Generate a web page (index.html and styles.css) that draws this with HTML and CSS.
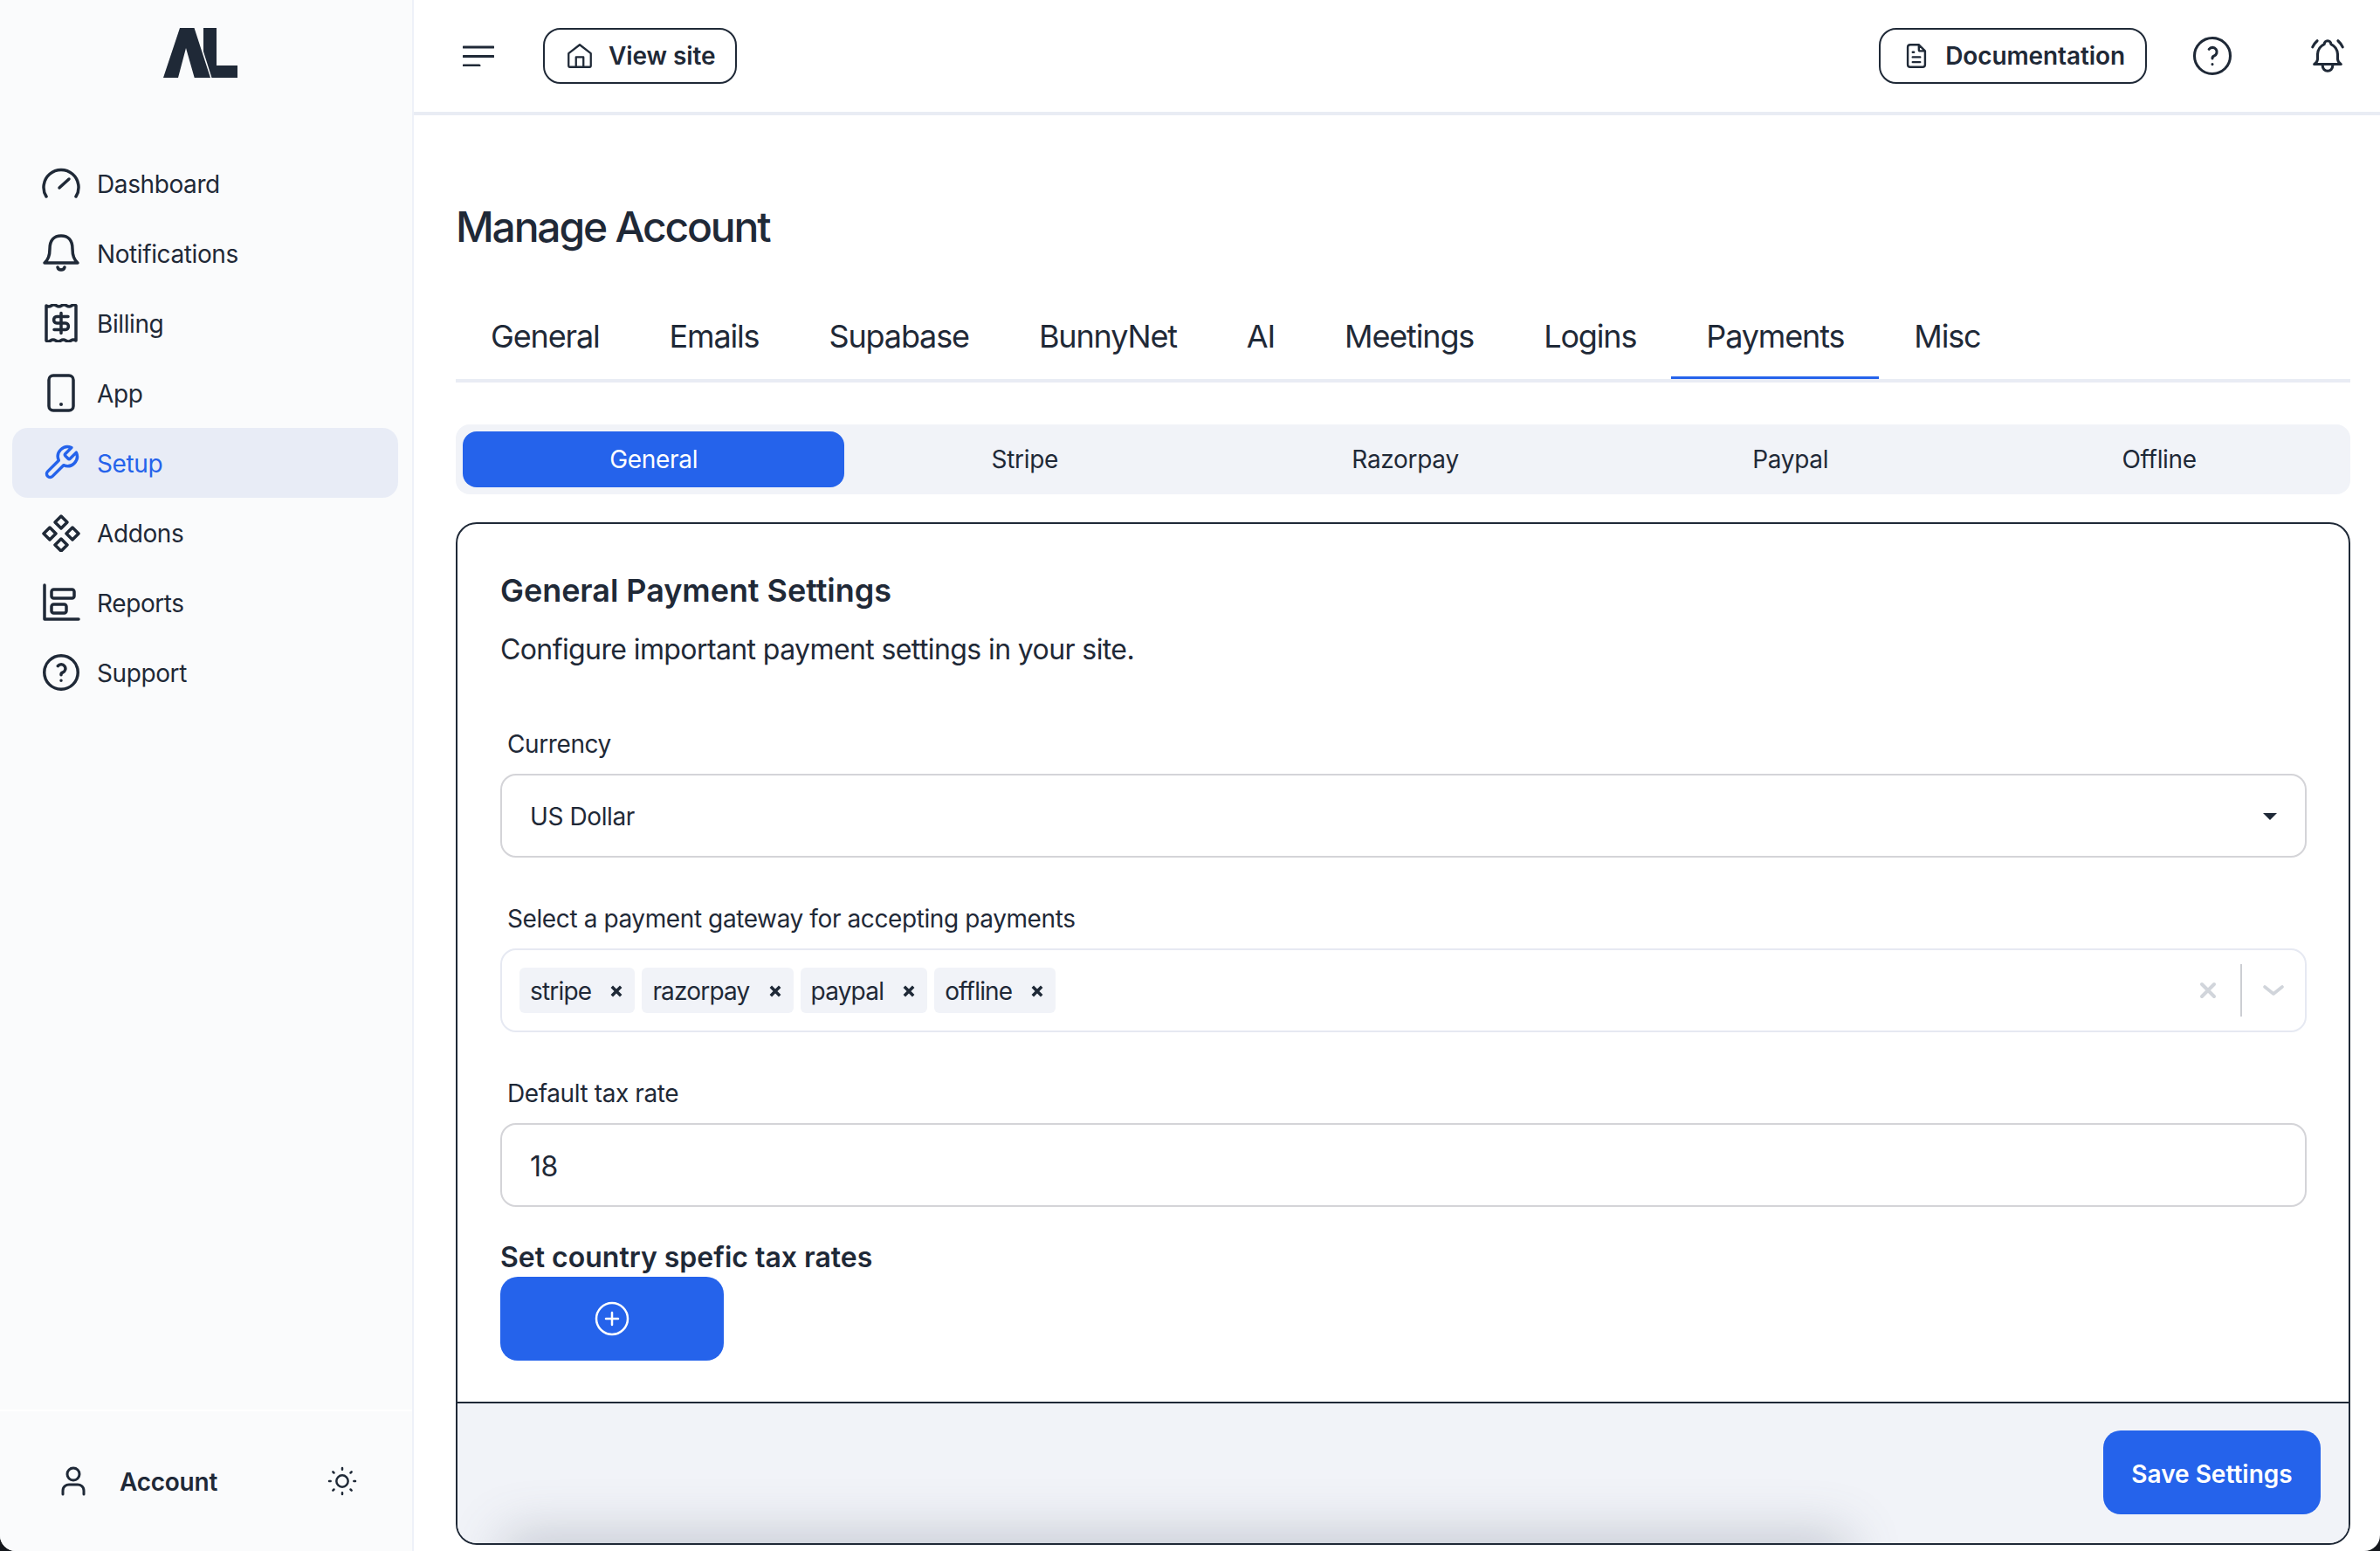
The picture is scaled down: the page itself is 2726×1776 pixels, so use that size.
FILE: index.html
```html
<!DOCTYPE html>
<html lang="en">
<head>
<meta charset="utf-8">
<title>Manage Account</title>
<link rel="stylesheet" href="styles.css">
</head>
<body>
<div class="app">
  <aside class="sidebar">
    <div class="logo">
      <svg width="85" height="57" viewBox="0 0 85 57"><path class="logo-mark" d="M0 57 19 0H35.500L54 57H35.700L26 23 17 57Z"/><path class="logo-mark" d="M46 0H61V43H85V57H55.500L46 27Z"/></svg>
    </div>
    <nav class="nav">
      <a class="nav-item"><svg class="nav-icon" viewBox="0 0 44 44"><path d="M5 37A20 20 0 1 1 39 37"/><path d="M20 27 31 17"/></svg><span>Dashboard</span></a>
      <a class="nav-item"><svg class="nav-icon" viewBox="0 0 44 44"><path d="M3 33C8 29 9 24 9 17 9 7 14 2 22 2 30 2 35 7 35 17 35 24 36 29 41 33Z"/><path d="M18 38C19 42 25 42 26 38"/></svg><span>Notifications</span></a>
      <a class="nav-item"><svg class="nav-icon" viewBox="0 0 44 44"><path d="M5 2Q8 4 10.800 2T16.600 2 22.400 2 28.200 2 34 2 39 2V42Q36 40 33.200 42T27.400 42 21.600 42 15.800 42 10 42 5 42Z"/><path d="M30 14.500H17C12.500 14.500 12.500 22 17 22H27C31.500 22 31.500 29.500 27 29.500H14M22 10.500V33.500"/></svg><span>Billing</span></a>
      <a class="nav-item"><svg class="nav-icon" viewBox="0 0 44 44"><rect x="8" y="2" width="28" height="40" rx="5"/><circle class="dot" cx="22" cy="35" r="2"/></svg><span>App</span></a>
      <a class="nav-item active"><svg class="nav-icon wrench" viewBox="0 0 24 24"><path d="M14.700 6.300a1 1 0 0 0 0 1.400l1.600 1.600a1 1 0 0 0 1.400 0l3.770-3.770a6 6 0 0 1-7.940 7.940l-6.910 6.910a2.120 2.120 0 0 1-3-3l6.910-6.910a6 6 0 0 1 7.940-7.940l-3.760 3.760z"/></svg><span>Setup</span></a>
      <a class="nav-item"><svg class="nav-icon" viewBox="0 0 44 44"><path d="M22 3 29 10 22 17 15 10Z"/><path d="M9 16 16 23 9 30 2 23Z"/><path d="M35 16 42 23 35 30 28 23Z"/><path d="M22 29 29 36 22 43 15 36Z"/></svg><span>Addons</span></a>
      <a class="nav-item"><svg class="nav-icon" viewBox="0 0 44 44"><path d="M3 2V41H42"/><rect x="11" y="7" width="26" height="10" rx="2.500"/><rect x="11" y="24" width="17" height="10" rx="2.500"/></svg><span>Reports</span></a>
      <a class="nav-item"><svg class="nav-icon" viewBox="0 0 24 24"><circle cx="12" cy="12" r="10.500"/><path d="M12 17v.01M12 13.500a1.500 1.500 0 0 1 1-1.500 2.600 2.600 0 1 0-3-4"/></svg><span>Support</span></a>
    </nav>
    <div class="side-foot">
      <svg class="person" viewBox="0 0 34 36"><circle cx="17" cy="10" r="7"/><path d="M5 33V29C5 24 9 22 12 22H22C25 22 29 24 29 29V33"/></svg>
      <span class="account">Account</span>
      <svg class="sun" viewBox="0 0 24 24"><circle cx="12" cy="12" r="4"/><path d="M3 12h1m8-9v1m8 8h1m-9 8v1M5.600 5.600l.7.7m12.100-.7-.7.7m0 11.400.7.7M6.300 17.700l-.7.7"/></svg>
    </div>
  </aside>
  <div class="main">
    <header class="topbar">
      <svg class="burger" viewBox="0 0 36 24"><path d="M1 2H35M1 12.500H35M1 23H19"/></svg>
      <a class="ghost-btn view-site"><svg class="home" viewBox="0 0 24 24"><path d="M3 10 12 3l9 7v10a1 1 0 0 1-1 1H4a1 1 0 0 1-1-1ZM9 21v-8h6v8"/></svg>View site</a>
      <a class="ghost-btn docs"><svg class="doc" viewBox="0 0 24 24"><path d="M14 3v4a1 1 0 0 0 1 1h4M17 21H7a2 2 0 0 1-2-2V5a2 2 0 0 1 2-2h7l5 5v11a2 2 0 0 1-2 2zM9 9h1M9 13h6M9 17h6"/></svg>Documentation</a>
      <svg class="top-icon help" viewBox="0 0 24 24"><circle cx="12" cy="12" r="10.700"/><path d="M12 17v.01M12 13.500a1.500 1.500 0 0 1 1-1.500 2.600 2.600 0 1 0-3-4"/></svg>
      <svg class="top-icon bell" viewBox="0 0 24 24"><path d="M10 5a2 2 0 0 1 4 0 7 7 0 0 1 4 6v3a4 4 0 0 0 2 3H4a4 4 0 0 0 2-3v-3a7 7 0 0 1 4-6M9 17v1a3 3 0 0 0 6 0v-1M21 6.727A11.050 11.050 0 0 0 18.206 3M3 6.727A11.050 11.050 0 0 1 5.792 3"/></svg>
    </header>
    <main class="content">
      <h1 class="page-title">Manage Account</h1>
      <div class="tabs">
        <a class="tab">General</a>
        <a class="tab">Emails</a>
        <a class="tab">Supabase</a>
        <a class="tab">BunnyNet</a>
        <a class="tab">AI</a>
        <a class="tab">Meetings</a>
        <a class="tab">Logins</a>
        <a class="tab active">Payments</a>
        <a class="tab">Misc</a>
      </div>
      <div class="subtabs">
        <a class="subtab active">General</a>
        <a class="subtab">Stripe</a>
        <a class="subtab">Razorpay</a>
        <a class="subtab">Paypal</a>
        <a class="subtab">Offline</a>
      </div>
      <section class="card">
        <div class="card-body">
          <h2 class="card-title">General Payment Settings</h2>
          <p class="card-sub">Configure important payment settings in your site.</p>
          <div class="field first">
            <div class="label">Currency</div>
            <div class="control">US Dollar<span class="caret"></span></div>
          </div>
          <div class="field">
            <div class="label">Select a payment gateway for accepting payments</div>
            <div class="control multi">
              <span class="tag">stripe<svg class="tag-x" viewBox="0 0 14 14"><path d="M1.800 1.800 12.200 12.200M12.200 1.800 1.800 12.200"/></svg></span>
              <span class="tag">razorpay<svg class="tag-x" viewBox="0 0 14 14"><path d="M1.800 1.800 12.200 12.200M12.200 1.800 1.800 12.200"/></svg></span>
              <span class="tag">paypal<svg class="tag-x" viewBox="0 0 14 14"><path d="M1.800 1.800 12.200 12.200M12.200 1.800 1.800 12.200"/></svg></span>
              <span class="tag">offline<svg class="tag-x" viewBox="0 0 14 14"><path d="M1.800 1.800 12.200 12.200M12.200 1.800 1.800 12.200"/></svg></span>
              <span class="multi-tools">
                <svg class="clear-x" viewBox="0 0 20 20"><path d="M3 3 17 17M17 3 3 17"/></svg>
                <span class="sep"></span>
                <svg class="chev" viewBox="0 0 24 14"><path d="M2 3 12 11 22 3"/></svg>
              </span>
            </div>
          </div>
          <div class="field">
            <div class="label">Default tax rate</div>
            <div class="control big">18</div>
          </div>
          <h3 class="rates-title">Set country spefic tax rates</h3>
          <button class="primary add"><svg class="plus" viewBox="0 0 40 40"><circle cx="20" cy="20" r="18"/><path d="M20 13V27M13 20H27"/></svg></button>
        </div>
        <div class="card-foot">
          <span class="foot-shadow"></span>
          <button class="primary save">Save Settings</button>
        </div>
      </section>
    </main>
  </div>
</div>
</body>
</html>
```

FILE: styles.css
```css
* { box-sizing: border-box; }
html, body { margin: 0; height: 100%; background: #14171c; }
body { font-family: Inter, "Liberation Sans", sans-serif; color: #1f2937; font-size: 28px; letter-spacing: -0.4px; }
svg { display: block; flex: none; fill: none; stroke: currentColor; stroke-linecap: round; stroke-linejoin: round; }
a { color: inherit; text-decoration: none; }
h1, h2, h3, p { margin: 0; }

.app { display: flex; height: 1776px; background: #fff; border-radius: 0 0 18px 18px; overflow: hidden; }

/* Sidebar */
.sidebar { width: 474px; flex: none; display: flex; flex-direction: column; background: #fafbfc; border-right: 2px solid #eef1f8; }
.logo { display: flex; justify-content: center; padding: 32px 13px 81px 0; }
.logo svg { stroke: none; }
.logo-mark { fill: #1f2937; stroke: none; }
.nav { display: flex; flex-direction: column; }
.nav-item { display: flex; align-items: center; gap: 19px; height: 80px; margin: 0 16px 0 14px; padding-left: 34px; border-radius: 18px; }
.nav-item span { padding-top: 2px; }
.nav-item.active { background: #e8ecf6; color: #2563eb; }
.nav-icon { width: 44px; height: 44px; stroke-width: 3.500; }
.nav-icon[viewBox="0 0 24 24"] { stroke-width: 1.900; }
.nav-icon .dot { fill: currentColor; stroke: none; }
.side-foot { margin-top: auto; display: flex; align-items: center; height: 162px; padding: 0 60px 0 67px; border-top: 2px solid #fff; }
.person { width: 34px; height: 36px; stroke-width: 3; margin-right: 36px; }
.account { flex: 1; font-weight: 600; letter-spacing: -0.25px; padding-top: 2px; }
.sun { width: 40px; height: 40px; stroke-width: 1.500; }

/* Top bar */
.main { flex: 1; min-width: 0; display: flex; flex-direction: column; }
.topbar { display: flex; align-items: center; height: 132px; padding: 0 37px 0 56px; border-bottom: 4px solid #e9ecf4; }
.burger { width: 36px; height: 24px; stroke-width: 3; margin-right: 56px; }
.ghost-btn { display: flex; align-items: center; height: 64px; border: 2.500px solid #1f2937; border-radius: 20px; font-weight: 600; letter-spacing: -0.1px; }
.view-site { padding: 0 23px 0 23px; gap: 16px; }
.docs { margin-left: auto; padding: 0 23px 0 24px; gap: 16px; }
.home { width: 34px; height: 34px; stroke-width: 1.600; }
.doc { width: 34px; height: 34px; stroke-width: 1.700; }
.top-icon { width: 46px; height: 46px; stroke-width: 1.600; }
.help { margin-left: 52px; }
.bell { margin-left: 86px; }

/* Content */
.content { flex: 1; padding: 98px 34px 0 48px; min-height: 0; }
.page-title { font-size: 48px; font-weight: 500; line-height: 60px; margin-bottom: 55px; letter-spacing: -2.2px; }
.tabs { display: flex; border-bottom: 4px solid #e9ecf4; }
.tab { font-size: 36px; line-height: 44px; padding: 18px 40px 27px; letter-spacing: -1.15px; }
.tab.active { box-shadow: inset 0 -3px 0 #2563eb; }
.subtabs { display: flex; height: 80px; margin-top: 48px; padding: 8px; background: #f1f3f8; border-radius: 16px; letter-spacing: -0.3px; }
.subtab { flex: 1 1 auto; display: flex; align-items: center; justify-content: center; border-radius: 16px; }
.subtab.active { background: #2563eb; color: #fff; }

/* Card */
.card { margin-top: 32px; height: 1171px; display: flex; flex-direction: column; border: 2px solid #1f2937; border-radius: 24px; }
.card-body { flex: 1; padding: 54px 48px 0 49px; }
.card-title { font-size: 36px; font-weight: 600; line-height: 44px; letter-spacing: -0.05px; }
.card-sub { font-size: 32px; line-height: 48px; margin-top: 22px; letter-spacing: -0.6px; }
.field { margin-top: 48px; }
.field.first { margin-top: 62px; }
.label { line-height: 40px; margin-bottom: 16px; padding: 2px 0 0 8px; height: 40px; }
.control { position: relative; display: flex; align-items: center; height: 96px; padding: 2px 32px 0; border: 2px solid #d4d4d8; border-radius: 18px; }
.big { font-size: 32px; }
.caret { margin-left: auto; border-style: solid; border-width: 8px 8px 0; border-color: #1f2937 transparent transparent; }
.multi { gap: 8px; padding: 0 20px; border-color: #e6e9f2; }
.tag { display: flex; align-items: center; height: 52px; padding: 2px 14px 0 12px; background: #f1f3f8; border-radius: 6px; letter-spacing: -0.8px; }
.tag-x { width: 14px; height: 14px; margin-left: 22px; stroke-width: 3.500; stroke-linecap: butt; }
.multi-tools { margin-left: auto; display: flex; align-items: center; color: #d1d5db; }
.clear-x { width: 20px; height: 20px; stroke-width: 4; }
.sep { width: 2px; height: 60px; background: #ccced3; margin: 0 24px 0 27px; }
.chev { width: 24px; height: 14px; stroke-width: 3.600; margin-right: 4px; }
.rates-title { font-size: 32px; font-weight: 600; line-height: 44px; margin-top: 35px; padding-top: 1px; height: 44px; letter-spacing: 0; }
.primary { display: flex; align-items: center; justify-content: center; height: 96px; border: 0; border-radius: 20px; background: #2563eb; color: #fff; font: 600 28px Inter, "Liberation Sans", sans-serif; }
.add { width: 256px; margin-top: 1px; }
.plus { width: 40px; height: 40px; stroke-width: 2.500; }
.card-foot { position: relative; display: flex; justify-content: flex-end; height: 162px; padding: 31px 32px 0 0; background: #f1f3f8; border-top: 2px solid #1f2937; border-radius: 0 0 22px 22px; overflow: hidden; }
.save { position: relative; width: 249px; padding-top: 4px; }
.foot-shadow { position: absolute; left: 70px; right: 590px; bottom: -36px; height: 30px; box-shadow: 0 0 60px 16px rgba(90, 100, 120, 0.3); }
```
